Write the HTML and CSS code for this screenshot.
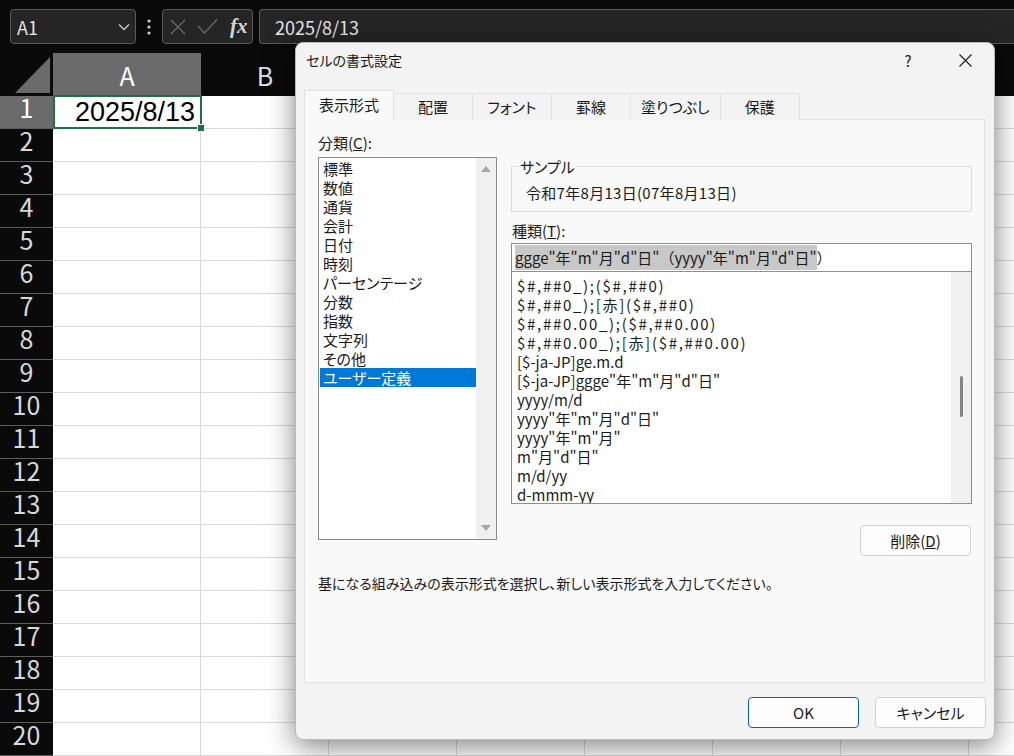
FILE: index.html
```html
<!DOCTYPE html>
<html lang="ja">
<head>
    <meta charset="UTF-8">
    <meta name="viewport" content="width=device-width, initial-scale=1.0">
    <title>セルの書式設定</title>
    <link rel="stylesheet" href="styles.css">
</head>
<body>

<!-- Formula bar -->
<div class="formula-bar">
    <div class="name-box">
        <span>A1</span>
        <svg width="12" height="8" viewBox="0 0 12 8"><polyline points="1,1.5 6,6.5 11,1.5" fill="none" stroke="#cfcfcf" stroke-width="1.3"/></svg>
    </div>
    <div class="bar-dots">
        <svg width="4" height="16" viewBox="0 0 4 16"><circle cx="2" cy="2" r="1.6" fill="#d0d0d0"/><circle cx="2" cy="8" r="1.6" fill="#d0d0d0"/><circle cx="2" cy="14" r="1.6" fill="#d0d0d0"/></svg>
    </div>
    <div class="fx-box">
        <svg width="16" height="16" viewBox="0 0 16 16"><path d="M1 1 L15 15 M15 1 L1 15" stroke="#6b6b6b" stroke-width="1.3"/></svg>
        <svg width="21" height="17" viewBox="0 0 21 17"><polyline points="1,8 7.5,15 20,1.5" fill="none" stroke="#6b6b6b" stroke-width="1.3"/></svg>
        <span class="fx">fx</span>
    </div>
    <div class="formula-input">2025/8/13</div>
</div>

<!-- Sheet -->
<div class="sheet">
    <div class="col-headers">
        <div class="corner"><span class="corner-tri"></span></div>
        <div class="col-head active">A</div>
        <div class="col-head">B</div>
    </div>
    <div class="sheet-body">
        <div class="row-heads">
            <div class="row-head active">1</div>
            <div class="row-head">2</div>
            <div class="row-head">3</div>
            <div class="row-head">4</div>
            <div class="row-head">5</div>
            <div class="row-head">6</div>
            <div class="row-head">7</div>
            <div class="row-head">8</div>
            <div class="row-head">9</div>
            <div class="row-head">10</div>
            <div class="row-head">11</div>
            <div class="row-head">12</div>
            <div class="row-head">13</div>
            <div class="row-head">14</div>
            <div class="row-head">15</div>
            <div class="row-head">16</div>
            <div class="row-head">17</div>
            <div class="row-head">18</div>
            <div class="row-head">19</div>
            <div class="row-head">20</div>
        </div>
        <div class="col-a-cells">
            <div class="cell-a1">2025/8/13<span class="fill-handle"></span></div>
        </div>
        <div class="other-cells"></div>
    </div>
</div>

<!-- Format Cells dialog -->
<div class="dialog">
    <div class="dlg-title">
        <span>セルの書式設定</span>
        <span class="dlg-help">?</span>
        <span class="dlg-close">
            <svg width="13" height="13" viewBox="0 0 13 13"><path d="M0.5 0.5 L12.5 12.5 M12.5 0.5 L0.5 12.5" stroke="#1a1a1a" stroke-width="1.1"/></svg>
        </span>
    </div>

    <div class="tabs">
        <div class="tab active">表示形式</div>
        <div class="tab">配置</div>
        <div class="tab">フォント</div>
        <div class="tab">罫線</div>
        <div class="tab">塗りつぶし</div>
        <div class="tab">保護</div>
    </div>

    <div class="panel">
        <div class="panel-body">
            <div class="cat-col">
                <div class="field-label">分類(<u>C</u>):</div>
                <div class="cat-list">
                    <div class="cat-items">
                        <div>標準</div>
                        <div>数値</div>
                        <div>通貨</div>
                        <div>会計</div>
                        <div>日付</div>
                        <div>時刻</div>
                        <div>パーセンテージ</div>
                        <div>分数</div>
                        <div>指数</div>
                        <div>文字列</div>
                        <div>その他</div>
                        <div class="selected">ユーザー定義</div>
                    </div>
                    <div class="cat-scroll">
                        <span class="arrow-up"></span>
                        <span class="arrow-down"></span>
                    </div>
                </div>
            </div>

            <div class="fmt-col">
                <fieldset class="sample">
                    <legend>サンプル</legend>
                    <div class="sample-text">令和7年8月13日(07年8月13日)</div>
                </fieldset>

                <div class="field-label type-label">種類(<u>T</u>):</div>
                <div class="type-input"><span class="sel">ggge"年"m"月"d"日"（yyyy"年"m"月"d"日"</span>）</div>
                <div class="fmt-list">
                    <div class="fmt-items">
                        <div class="num">$#,##0_);($#,##0)</div>
                        <div class="num">$#,##0_);[赤]($#,##0)</div>
                        <div class="num">$#,##0.00_);($#,##0.00)</div>
                        <div class="num">$#,##0.00_);[赤]($#,##0.00)</div>
                        <div>[$-ja-JP]ge.m.d</div>
                        <div>[$-ja-JP]ggge"年"m"月"d"日"</div>
                        <div>yyyy/m/d</div>
                        <div>yyyy"年"m"月"d"日"</div>
                        <div>yyyy"年"m"月"</div>
                        <div>m"月"d"日"</div>
                        <div>m/d/yy</div>
                        <div>d-mmm-yy</div>
                    </div>
                    <div class="fmt-scroll"><span class="thumb"></span></div>
                </div>

                <button class="btn delete-btn">削除(<u>D</u>)</button>
            </div>
        </div>

        <p class="hint">基になる組み込みの表示形式を選択し、新しい表示形式を入力してください。</p>
    </div>

    <div class="dlg-buttons">
        <button class="btn primary">OK</button>
        <button class="btn">キャンセル</button>
    </div>
</div>

</body>
</html>
```

FILE: styles.css
```css
body {
    margin: 0;
    width: 1014px;
    height: 756px;
    overflow: hidden;
    position: relative;
    background-color: #0a0a0a;
    font-family: "Noto Sans CJK JP", "Liberation Sans", sans-serif;
}

/* Formula bar */

.formula-bar {
    display: flex;
    height: 35px;
    padding: 9px 0 0 10px;
}

.name-box,
.fx-box,
.formula-input {
    box-sizing: border-box;
    height: 35px;
    border: 1px solid #5a5a5a;
    border-radius: 4px;
    background-color: #252525;
    display: flex;
    align-items: center;
}

.name-box {
    width: 126px;
    justify-content: space-between;
    padding: 0 5px 0 6px;
    color: #e6e6e6;
    font-size: 18px;
}

.bar-dots {
    width: 26px;
    display: flex;
    align-items: center;
    justify-content: center;
}

.fx-box {
    width: 91px;
    padding-left: 7px;
    gap: 11px;
}

.fx {
    font-family: "Liberation Serif", serif;
    font-style: italic;
    font-weight: bold;
    font-size: 21px;
    color: #d6d6d6;
    margin-left: 1px;
}

.formula-input {
    flex: 1;
    margin-left: 6px;
    border-right: none;
    border-radius: 4px 0 0 4px;
    padding-left: 15px;
    color: #e8e8e8;
    font-size: 18px;
}

/* Sheet */

.sheet {
    margin-top: 9px;
}

.col-headers {
    display: flex;
    height: 43px;
}

.corner {
    width: 53px;
    flex-shrink: 0;
    display: flex;
    align-items: flex-end;
    justify-content: flex-end;
    padding: 0 3px 3px 0;
    box-sizing: border-box;
}

.corner-tri {
    width: 35px;
    height: 36px;
    background-color: #6b6b6b;
    clip-path: polygon(100% 0, 100% 100%, 0 100%);
}

.col-head {
    width: 128px;
    flex-shrink: 0;
    display: flex;
    align-items: center;
    justify-content: center;
    color: #e0e0e0;
    font-size: 25px;
}

.col-head.active {
    width: 148px;
    background-color: #6b6b6b;
    color: #fff;
}

.sheet-body {
    display: flex;
    height: 660px;
}

.row-heads {
    width: 53px;
    flex-shrink: 0;
}

.row-head {
    box-sizing: border-box;
    height: 33px;
    border-bottom: 1px solid #5c5c5c;
    text-align: center;
    line-height: 22px;
    color: #d8d8d8;
    font-size: 25px;
}

.row-head.active {
    background-color: #6b6b6b;
    color: #fff;
}

.col-a-cells {
    width: 148px;
    flex-shrink: 0;
    box-sizing: border-box;
    border-right: 1px solid #dadada;
    background: repeating-linear-gradient(to bottom, transparent 0 32px, #dadada 32px 33px), #fff;
}

.cell-a1 {
    position: relative;
    box-sizing: border-box;
    width: 149px;
    height: 34px;
    margin-top: -1px;
    border: 2px solid #1e7145;
    padding-right: 5px;
    text-align: right;
    font-family: "Liberation Sans", sans-serif;
    font-size: 27px;
    line-height: 31px;
    color: #000;
}

.fill-handle {
    position: absolute;
    right: -5px;
    bottom: -5px;
    width: 6px;
    height: 6px;
    background-color: #1e7145;
    border: 1px solid #fff;
}

.other-cells {
    flex: 1;
    background:
        repeating-linear-gradient(to right, transparent 0 127px, #dadada 127px 128px),
        repeating-linear-gradient(to bottom, transparent 0 32px, #dadada 32px 33px),
        #fff;
}

/* Dialog */

.dialog {
    position: absolute;
    left: 295px;
    top: 42px;
    width: 700px;
    height: 698px;
    box-sizing: border-box;
    background-color: #f3f3f3;
    border: 1px solid #b9b9b9;
    border-radius: 8px;
    box-shadow: 0 6px 28px rgba(0, 0, 0, 0.5);
    color: #1a1a1a;
    font-size: 15px;
    font-feature-settings: "palt";
}

.dlg-title {
    box-sizing: border-box;
    display: flex;
    align-items: center;
    height: 38px;
    padding: 0 0 4px 10px;
    font-size: 14px;
}

.dlg-help {
    margin-left: auto;
    width: 46px;
    text-align: center;
    font-size: 15px;
}

.dlg-close {
    width: 46px;
    margin: 0 6px 0 11px;
    display: flex;
    justify-content: center;
}

.tabs {
    display: flex;
    align-items: flex-end;
    height: 30px;
    margin: 9px 0 -1px 8px;
    position: relative;
}

.tab {
    box-sizing: border-box;
    min-width: 80px;
    height: 27px;
    padding: 0 10px;
    border: 1px solid #e2e2e2;
    border-bottom: none;
    margin-right: -1px;
    text-align: center;
    line-height: 26px;
    background-color: #f3f3f3;
}

.tab.active {
    height: 30px;
    padding: 0 14px;
    line-height: 28px;
    background-color: #f9f9f9;
    position: relative;
    z-index: 1;
}

.panel {
    box-sizing: border-box;
    width: 681px;
    height: 564px;
    margin-left: 8px;
    border: 1px solid #e2e2e2;
    background-color: #f9f9f9;
}

.panel-body {
    display: flex;
    padding: 13px 0 0 13px;
}

.field-label {
    line-height: 19px;
    height: 19px;
}

.cat-col {
    width: 179px;
}

.cat-col .field-label {
    margin-bottom: 5px;
}

.cat-list {
    box-sizing: border-box;
    height: 383px;
    border: 1px solid #8a8a8a;
    background-color: #fff;
    display: flex;
}

.cat-items {
    flex: 1;
    padding: 1px 0 0 1px;
    line-height: 19px;
}

.cat-items div {
    padding-left: 3px;
}

.cat-items .selected {
    background-color: #0078d7;
    color: #fff;
}

.cat-scroll {
    width: 20px;
    background-color: #f0f0f0;
    display: flex;
    flex-direction: column;
    justify-content: space-between;
    align-items: center;
    padding: 8px 0 8px;
}

.arrow-up,
.arrow-down {
    width: 0;
    height: 0;
    border-left: 5px solid transparent;
    border-right: 5px solid transparent;
}

.arrow-up {
    border-bottom: 6px solid #a6a6a6;
}

.arrow-down {
    border-top: 6px solid #a6a6a6;
}

.fmt-col {
    width: 461px;
    margin-left: 14px;
    display: flex;
    flex-direction: column;
}

.sample {
    margin: 24px 0 0;
    padding: 0 0 0 7px;
    border: 1px solid #dcdcdc;
    min-width: 0;
}

.sample legend {
    padding: 0 1px;
    line-height: 19px;
}

.sample-text {
    padding: 7px 0 9px 7px;
    line-height: 19px;
    letter-spacing: 0.3px;
}

.type-label {
    margin: 9px 0 3px 1px;
}

.type-input {
    box-sizing: border-box;
    height: 29px;
    border: 1px solid #8f8f8f;
    background-color: #fff;
    padding-left: 3px;
    line-height: 27px;
    white-space: nowrap;
    font-feature-settings: normal;
}

.type-input .sel {
    background-color: #c8c8c8;
    padding: 2px 0;
}

.fmt-list {
    box-sizing: border-box;
    height: 233px;
    margin-top: -1px;
    border: 1px solid #8f8f8f;
    background-color: #fff;
    display: flex;
    overflow: hidden;
}

.fmt-items {
    flex: 1;
    padding: 4px 0 0 5px;
    line-height: 19px;
    white-space: nowrap;
}

.fmt-items .num {
    letter-spacing: 1.7px;
}

.fmt-scroll {
    width: 20px;
    background-color: #f0f0f0;
    display: flex;
    justify-content: center;
}

.thumb {
    width: 3px;
    height: 41px;
    margin-top: 104px;
    border-radius: 2px;
    background-color: #858585;
}

.btn {
    box-sizing: border-box;
    width: 111px;
    height: 31px;
    border: 1px solid #d0d0d0;
    border-radius: 4px;
    background-color: #fdfdfd;
    font-family: inherit;
    font-size: 15px;
    font-feature-settings: "palt";
    color: #1a1a1a;
    padding: 0;
}

.btn.primary {
    border-color: #0067c0;
}

.delete-btn {
    align-self: flex-end;
    margin: 21px 1px 0 0;
}

.hint {
    margin: 18px 0 0 13px;
    line-height: 19px;
    font-size: 14px;
}

.dlg-buttons {
    display: flex;
    justify-content: flex-end;
    gap: 16px;
    margin: 14px 8px 0 0;
}
```
